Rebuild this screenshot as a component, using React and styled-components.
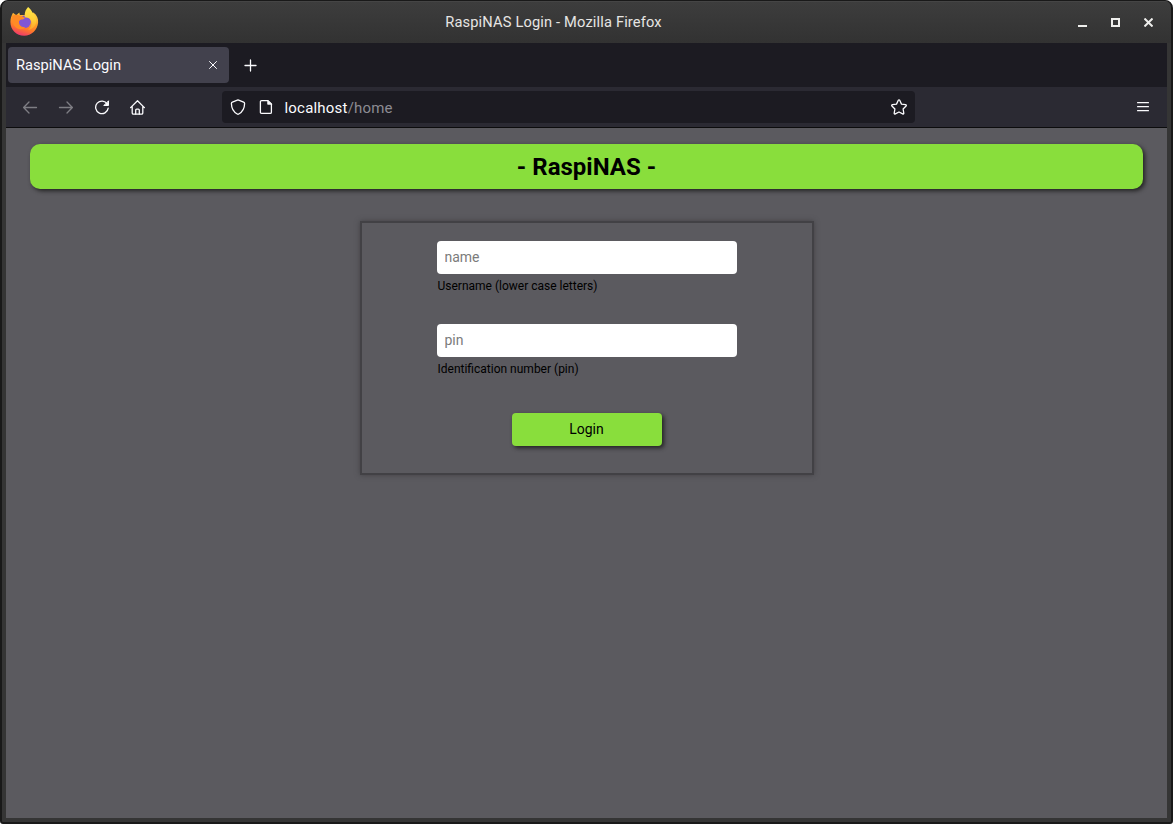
import React from "react";
import styled, { createGlobalStyle } from "styled-components";

const GlobalStyle = createGlobalStyle`
  * { box-sizing: border-box; }
  html, body { margin: 0; padding: 0; background: #fff; overflow: hidden; }
  body, input, button { font-family: Roboto, "Liberation Sans", sans-serif; }
`;

const Window = styled.div`
  width: 1173px;
  height: 824px;
  display: flex;
  flex-direction: column;
  background: #353535;
  border: 2px solid #191919;
  border-top-width: 1px;
  border-radius: 8px 8px 3px 3px;
  padding: 0 4px 4px;
  overflow: hidden;
`;

const TitleBar = styled.header`
  height: 42px;
  flex: none;
  display: flex;
  align-items: center;
  margin: 0 -4px;
  padding: 0 18px 2px 7px;
  background: linear-gradient(#3d3d3d, #323232);
  border-top: 1px solid #454545;
`;

const WindowTitle = styled.div`
  flex: 1;
  text-align: center;
  padding-right: 10px;
  font-size: 14.67px;
  line-height: 20px;
  letter-spacing: 0.15px;
  color: #e6e5e3;
`;

const WindowControls = styled.div`
  display: flex;
  gap: 24px;
  padding-top: 2px;
`;

const TabStrip = styled.div`
  height: 44px;
  flex: none;
  display: flex;
  align-items: center;
  padding-left: 2px;
  background: #1c1b22;
`;

const Tab = styled.div`
  width: 221px;
  height: 36px;
  display: flex;
  align-items: center;
  justify-content: space-between;
  padding: 0 11px 0 8px;
  border-radius: 4px;
  background: #42414d;
  color: #fbfbfe;
  font-size: 14.67px;
`;

const NewTab = styled.div`
  display: flex;
  margin-left: 15px;
`;

const Toolbar = styled.nav`
  height: 41px;
  flex: none;
  display: flex;
  align-items: center;
  padding: 0 16px;
  background: #2b2a33;
  border-bottom: 1px solid #0c0c0d;
`;

const NavButtons = styled.div`
  display: flex;
  gap: 20px;
  width: 200px;
`;

const AddressBar = styled.div`
  width: 693px;
  height: 32px;
  display: flex;
  align-items: center;
  padding: 0 8px;
  border-radius: 4px;
  background: #1c1b22;
`;

const Address = styled.div`
  flex: 1;
  padding: 2px 0 0 10.5px;
  font-size: 15px;
  letter-spacing: 0.2px;
  color: #fbfbfe;
`;

const AddressPath = styled.span`
  color: #8c8b93;
`;

const MenuButton = styled.div`
  display: flex;
  margin-left: auto;
`;

const Icon = styled.svg`
  display: block;
  flex: none;
  width: ${(p) => p.$size || 16}px;
  height: ${(p) => p.$size || 16}px;
  margin-left: ${(p) => p.$gap || 0}px;
  opacity: ${(p) => (p.$dim ? 0.4 : 1)};
  fill: none;
  stroke: #fbfbfe;
  stroke-width: 1.3;
  stroke-linecap: round;
  stroke-linejoin: round;
`;

const ControlIcon = styled(Icon)`
  stroke: #eeeeec;
  stroke-width: 2;
  stroke-linecap: butt;
  stroke-linejoin: miter;
`;

const LogoIcon = styled(Icon)`
  stroke: none;
`;

const Page = styled.main`
  flex: 1;
  display: flex;
  flex-direction: column;
  align-items: center;
  padding: 16px 24px;
  background: #5b5a5f;
`;

const Banner = styled.h1`
  width: 100%;
  height: 45px;
  margin: 0 0 32px;
  border-radius: 10px;
  background: #89de3c;
  box-shadow: 2px 2px 4px #222;
  color: #000;
  font-size: 24px;
  font-weight: 700;
  line-height: 46px;
  text-align: center;
`;

const LoginForm = styled.form`
  width: 454px;
  height: 254px;
  display: flex;
  flex-direction: column;
  align-items: center;
  padding-top: 18px;
  border: 2px solid #424145;
  box-shadow: 0 0 5px #424145;
`;

const Field = styled.label`
  width: 300px;
  height: 83px;
  display: flex;
  flex-direction: column;
  gap: 5px;
`;

const TextInput = styled.input`
  width: 100%;
  height: 33px;
  padding: 0 8px 2px;
  border: 0;
  border-radius: 4px;
  background: #fff;
  font-size: 14px;
  &::placeholder { color: #7b7b7b; opacity: 1; }
`;

const Hint = styled.span`
  padding-left: 1px;
  font-size: 12px;
  line-height: 14px;
  color: #000;
`;

const LoginButton = styled.button`
  width: 150px;
  height: 33px;
  margin-top: 6px;
  padding: 0 0 2px;
  border: 0;
  border-radius: 4px;
  background: #89de3c;
  box-shadow: 2px 2px 4px #222;
  color: #000;
  font-size: 14px;
`;

const FirefoxLogo = () => (
  <LogoIcon $size={30} viewBox="-0.4 0.9 30 30">
    <defs>
      <linearGradient id="flame" x1="0.8" y1="0.1" x2="0.45" y2="1">
        <stop offset="0.05" stopColor="#ffc83e" />
        <stop offset="0.35" stopColor="#ffa128" />
        <stop offset="0.68" stopColor="#ff7a28" />
        <stop offset="1" stopColor="#f03c69" />
      </linearGradient>
      <linearGradient id="tail" x1="0.5" y1="0" x2="0.5" y2="1">
        <stop offset="0" stopColor="#ffe94b" />
        <stop offset="0.6" stopColor="#ffcb35" />
        <stop offset="1" stopColor="#ffa02a" />
      </linearGradient>
    </defs>
    <path fill="url(#flame)" d="M3.600 6.600L6.800 9.200 9.900 6.400 10.500 9 17 9 24 6.500c3.500 2.600 5 6 4.700 10C28.100 24 22 29.700 14.800 29.700 6.900 29.700 1 23.600 1 15.800c0-3.300.9-6 2.600-9.200z" />
    <circle cx="15.200" cy="15.700" r="6.300" fill="#8056d4" />
    <path fill="#ff8b25" d="M3 9.600C5.500 8.200 8.200 8.600 10.300 9.300c1.500-.1 2.800.6 3.700 1.800l1.500.2c-.3 1.400-1.700 1.900-3.700 2.200-1 .6-1.700 1-2.200 1.700-.4 3.800 2.300 6.300 6.200 5.900-2.600 3.300-8.800 2.300-11.200-1.700-1.700-2.700-2-6.400-1.600-9.800z" />
    <path fill="url(#tail)" d="M18.700.9c3.400 2.500 4.200 5.600 5.700 7.500 3 3.800 3.400 8.400.5 12-1.500 1.900-3.700 3.200-6.200 3.300 3.600-2.400 4.700-7.500 2-10.500-1.400-1.600-3.600-2-5.300-2.100-.6-4.400 1-7.900 3.300-10.200z" />
  </LogoIcon>
);

export default function App() {
  return (
    <>
      <GlobalStyle />
      <Window>
        <TitleBar>
          <FirefoxLogo />
          <WindowTitle>RaspiNAS Login - Mozilla Firefox</WindowTitle>
          <WindowControls>
            <ControlIcon $size={9} viewBox="0 0 9 9">
              <path d="M0 8h9" />
            </ControlIcon>
            <ControlIcon $size={9} viewBox="0 0 9 9">
              <path d="M1 1h7v7H1z" />
            </ControlIcon>
            <ControlIcon $size={9} viewBox="0 0 9 9">
              <path d="M.5.5l8 8M8.500.5l-8 8" />
            </ControlIcon>
          </WindowControls>
        </TitleBar>
        <TabStrip>
          <Tab>
            RaspiNAS Login
            <Icon $size={10} viewBox="0 0 10 10">
              <path d="M1.500 1.500l7 7M8.500 1.500l-7 7" style={{ strokeWidth: 1 }} />
            </Icon>
          </Tab>
          <NewTab>
            <Icon $size={13} viewBox="0 0 13 13">
              <path d="M6.500 1v11M1 6.500h11" />
            </Icon>
          </NewTab>
        </TabStrip>
        <Toolbar>
          <NavButtons>
            <Icon $dim viewBox="0 0 16 16">
              <path d="M14.500 8.500H1.600M7 3L1.600 8.500 7 14" />
            </Icon>
            <Icon $dim viewBox="0 0 16 16">
              <path d="M1.500 8.500h12.900M9 3l5.400 5.500L9 14" />
            </Icon>
            <Icon viewBox="0 0 16 16">
              <path d="M13.300 5A6.300 6.300 0 1 0 14.200 9.200" />
              <path d="M14.500 2.200v4.300h-4.300z" fill="#fbfbfe" strokeWidth="1" />
            </Icon>
            <Icon viewBox="0.5 0 16 16">
              <path d="M1.100 8.600L8 1.800l6.900 6.800M2.700 7.400v6.500c0 .8.500 1.300 1.300 1.300h8c.8 0 1.300-.5 1.300-1.300V7.400" />
              <path d="M6.200 15v-3.900c0-.6.400-1 1-1h1.600c.6 0 1 .4 1 1V15" />
            </Icon>
          </NavButtons>
          <AddressBar>
            <Icon viewBox="0 0 16 16">
              <path d="M8 .9l5.600 2.200c.7.300 1 .8 1 1.500-.1 5.200-2.200 8.500-5.800 10.400-.5.300-1.100.3-1.600 0C3.600 13.100 1.500 9.800 1.400 4.600c0-.7.300-1.200 1-1.500z" />
            </Icon>
            <Icon $gap={12} viewBox="0 0 16 16">
              <path d="M3.600 1.600H10L13.400 5v8.200c0 .8-.4 1.200-1.200 1.200H3.600c-.8 0-1.200-.4-1.200-1.200V2.800c0-.8.400-1.200 1.200-1.200z" />
              <path d="M9.700 1.700v3.600h3.600z" fill="#fbfbfe" strokeWidth=".8" />
            </Icon>
            <Address>
              localhost<AddressPath>/home</AddressPath>
            </Address>
            <Icon viewBox="0 0 16 16">
              <path d="M7.300 1.300c.3-.6 1.100-.6 1.400 0l1.800 3.800 4.100.6c.7.100.9.900.5 1.300l-3 3 .7 4.100c.1.700-.6 1.100-1.100.8L8 13l-3.700 1.900c-.5.300-1.200-.1-1.100-.8l.7-4.100-3-3c-.4-.4-.2-1.200.5-1.300l4.100-.6z" />
            </Icon>
          </AddressBar>
          <MenuButton>
            <Icon viewBox="0 0 16 16">
              <path d="M2.600 3.650h10.800M2.600 7.650h10.800M2.600 11.650h10.800" />
            </Icon>
          </MenuButton>
        </Toolbar>
        <Page>
          <Banner>- RaspiNAS -</Banner>
          <LoginForm onSubmit={(e) => e.preventDefault()}>
            <Field>
              <TextInput placeholder="name" />
              <Hint>Username (lower case letters)</Hint>
            </Field>
            <Field>
              <TextInput placeholder="pin" />
              <Hint>Identification number (pin)</Hint>
            </Field>
            <LoginButton type="submit">Login</LoginButton>
          </LoginForm>
        </Page>
      </Window>
    </>
  );
}
